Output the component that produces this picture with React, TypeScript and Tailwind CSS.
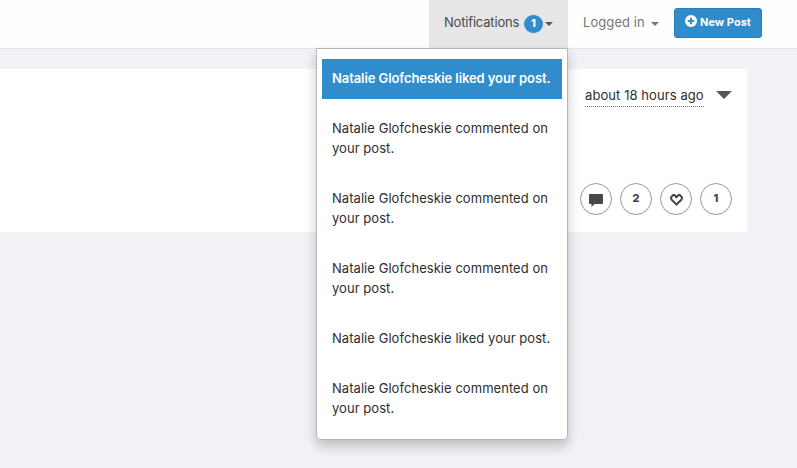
import React from 'react';

const notifications = [
  { text: 'Natalie Glofcheskie liked your post.', unread: true },
  { text: 'Natalie Glofcheskie commented on your post.' },
  { text: 'Natalie Glofcheskie commented on your post.' },
  { text: 'Natalie Glofcheskie commented on your post.' },
  { text: 'Natalie Glofcheskie liked your post.' },
  { text: 'Natalie Glofcheskie commented on your post.' },
];

function Caret({ className }: { className: string }) {
  return <span className={`border-x-4 border-t-4 border-x-transparent ${className}`} />;
}

function NotificationMenu() {
  return (
    <ul className="absolute top-full right-0 z-10 h-[392px] w-[252px] rounded-b-[5px] border border-[#b5b6b8] bg-white px-[5px] py-[10px] text-[#2e2e2e] shadow-[0_6px_12px_rgba(0,0,0,0.22)]">
      {notifications.map((n, i) => (
        <li
          key={i}
          className={
            n.unread
              ? 'mb-[10px] bg-[#318ccc] px-[10px] pt-[9px] pb-[11px] text-[13px] leading-5 font-semibold whitespace-nowrap text-white'
              : 'mb-[10px] px-[10px] pt-[9px] pb-[11px] text-[13px] leading-5'
          }
        >
          <span className={n.unread ? 'tracking-[-0.09px]' : 'tracking-[0.05px]'}>{n.text}</span>
        </li>
      ))}
    </ul>
  );
}

function Navbar() {
  return (
    <header className="flex h-[49px] justify-end border-b border-[#e5e5e7] bg-[#fefefe] pr-[35px]">
      <div className="relative flex h-12 w-[139px] items-center bg-[#e6e6e6] pb-[3px] pl-[15px] text-[#4a4a4a]">
        <span className="w-[80px] text-[13px] tracking-[-0.18px] whitespace-nowrap">Notifications</span>
        <span className="mt-[3px] flex h-[18px] w-[19px] items-center justify-center rounded-full bg-[#318ccc] pb-px text-[11px] font-extrabold text-white">
          1
        </span>
        <Caret className="mt-[3px] ml-[2px] border-t-[#555]" />
        <NotificationMenu />
      </div>
      <div className="flex h-12 w-[106px] items-center pb-[3px] pl-[15px] text-[#777]">
        <span className="w-[68px] text-[13px] tracking-[0.08px] whitespace-nowrap">Logged in</span>
        <Caret className="mt-[3px] border-t-[#777]" />
      </div>
      <button className="mt-2 flex h-[30px] w-[88px] items-center rounded-[3px] border border-[#2b7cb5] bg-[#318ccc] pb-[2px] pl-[10px] text-[11px] font-bold whitespace-nowrap text-white">
        <svg className="-mt-0.5 h-3 w-3 shrink-0" viewBox="0 0 12 12">
          <circle cx="6" cy="6" r="6" fill="white" />
          <path d="M6 2.7v6.6M2.7 6h6.6" stroke="#318ccc" strokeWidth="2" />
        </svg>
        <span className="ml-[3px] tracking-[0.02px]">New Post</span>
      </button>
    </header>
  );
}

function Action({ children }: { children: React.ReactNode }) {
  return (
    <span className="flex h-8 w-8 items-center justify-center rounded-full border border-[#999] text-[11px] font-extrabold text-[#444]">
      {children}
    </span>
  );
}

function Post() {
  return (
    <article className="mt-5 mr-[50px] flex h-[163px] flex-col items-end bg-white pt-[16px] pr-[15px]">
      <div className="flex items-start">
        <span className="h-[22px] w-[119px] border-b border-dotted border-[#777] text-[13px] leading-5 tracking-[0.08px] whitespace-nowrap text-[#2e2e2e]">
          about 18 hours ago
        </span>
        <span className="mt-[6px] ml-3 border-x-8 border-t-8 border-x-transparent border-t-[#555]" />
      </div>
      <div className="mt-[76px] flex gap-2">
        <Action>
          <svg className="mt-[3px] h-[13px] w-[14px]" viewBox="0 0 14 13" fill="#484848">
            <path d="M1 0h12a1 1 0 0 1 1 1v8a1 1 0 0 1-1 1H5.5L2.500 13V10H1a1 1 0 0 1-1-1V1a1 1 0 0 1 1-1z" />
          </svg>
        </Action>
        <Action>
          <span className="-mt-0.5">2</span>
        </Action>
        <Action>
          <svg className="mt-0.5 ml-px h-3 w-[13px]" viewBox="0 0 13 12" fill="none" stroke="#484848" strokeWidth="2">
            <path d="M6.5 10.500 1.700 5.700Q1 5 1 4V3.300L3.200 1H4.500L6.500 3.200 8.500 1H9.800L12 3.300V4Q12 5 11.300 5.700z" />
          </svg>
        </Action>
        <Action>
          <span className="-mt-0.5">1</span>
        </Action>
      </div>
    </article>
  );
}

export default function App() {
  return (
    <div className="h-[468px] overflow-hidden bg-[#f0f2f6] font-[Inter,'Liberation_Sans',sans-serif]">
      <Navbar />
      <Post />
    </div>
  );
}
